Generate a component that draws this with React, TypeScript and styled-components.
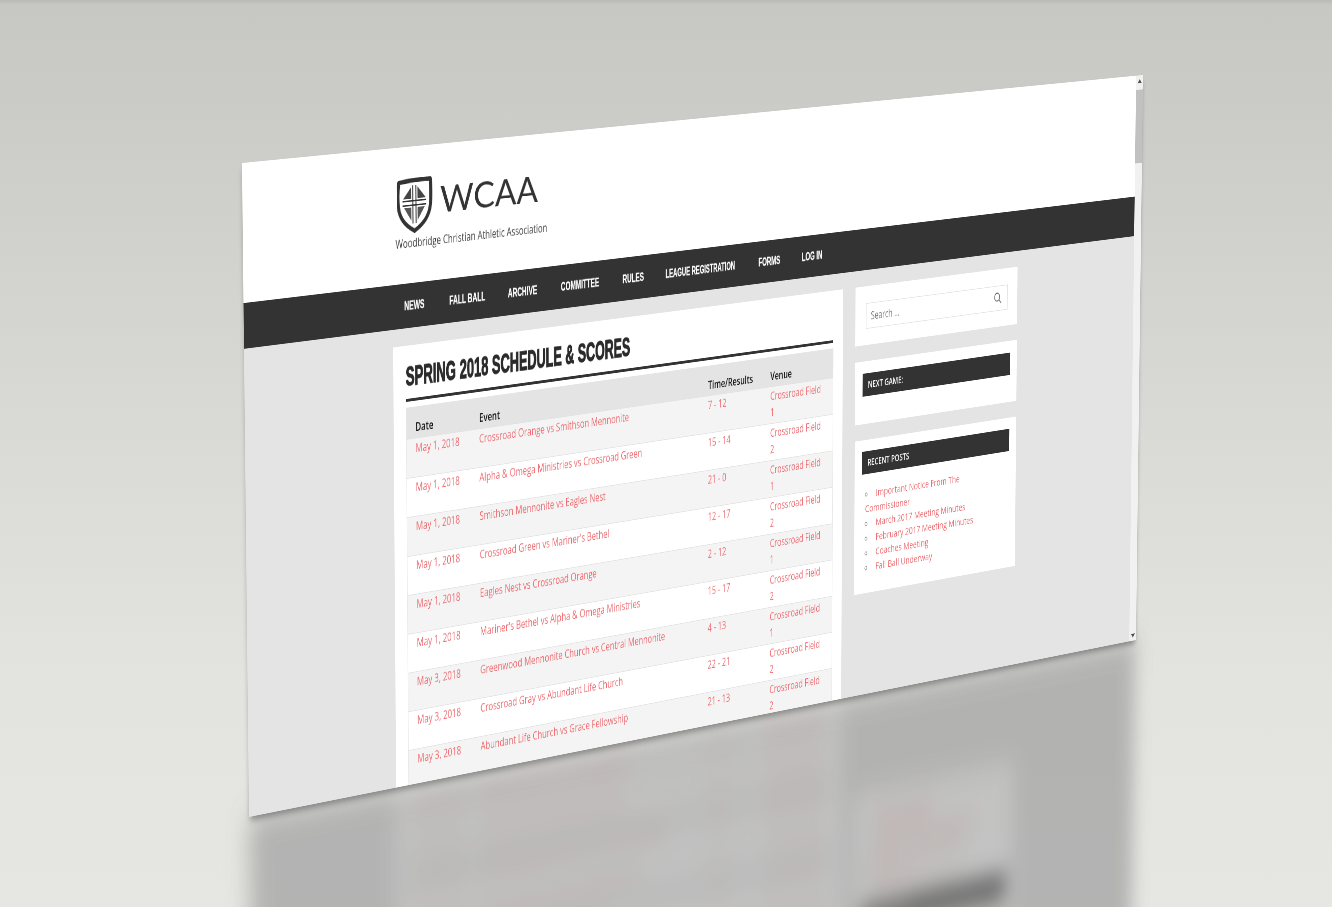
import styled, { createGlobalStyle } from "styled-components";

type Point = [number, number];

const SCREEN_W = 1920;
const SCREEN_H = 880;

// maps the 1920x880 page onto four corners of the photo
function quadMatrix(p0: Point, p1: Point, p2: Point, p3: Point) {
  const [x0, y0] = p0;
  const [x1, y1] = p1;
  const [x2, y2] = p2;
  const [x3, y3] = p3;
  const dx1 = x1 - x2;
  const dx2 = x3 - x2;
  const sx = x0 - x1 + x2 - x3;
  const dy1 = y1 - y2;
  const dy2 = y3 - y2;
  const sy = y0 - y1 + y2 - y3;
  const den = dx1 * dy2 - dx2 * dy1;
  const g = (sx * dy2 - dx2 * sy) / den;
  const h = (dx1 * sy - sx * dy1) / den;
  const a = x1 - x0 + g * x1;
  const b = x3 - x0 + h * x3;
  const d = y1 - y0 + g * y1;
  const e = y3 - y0 + h * y3;
  return `matrix3d(${a / SCREEN_W},${d / SCREEN_W},0,${g / SCREEN_W},${b / SCREEN_H},${e / SCREEN_H},0,${h / SCREEN_H},0,0,1,0,${x0},${y0},0,1)`;
}

const FRONT = quadMatrix([242, 163], [1143, 75], [1136, 640], [249, 817]);
const MIRROR = quadMatrix([256, 1440], [1129, 1180], [1136, 640], [249, 817]);

const LINK_RED = "#ec6c71";

const GlobalStyle = createGlobalStyle`
  html, body {
    margin: 0;
    padding: 0;
    overflow: hidden;
    background: #d6d7d2;
  }
`;

const Stage = styled.div`
  position: relative;
  width: 1332px;
  height: 907px;
  overflow: hidden;
  background: linear-gradient(
    180deg,
    #b9bab5 0,
    #c7c8c3 5px,
    #cbccc7 110px,
    #d9dad5 420px,
    #e3e4df 680px,
    #e6e7e2 907px
  );
`;

const Screen = styled.div<{ $mirror?: boolean }>`
  position: absolute;
  left: 0;
  top: 0;
  width: ${SCREEN_W}px;
  height: ${SCREEN_H}px;
  display: flex;
  overflow: hidden;
  transform-origin: 0 0;
  transform: ${(p) => (p.$mirror ? MIRROR : FRONT)};
  background: #e4e4e4;
  font-family: "Open Sans", "Liberation Sans", sans-serif;
  font-size: 15.5px;
  line-height: 24px;
  color: #333;
  ${(p) =>
    p.$mirror
      ? `filter: blur(20px) brightness(0.72); opacity: 0.78;`
      : `filter: blur(0.6px); box-shadow: 0 7px 10px -3px rgba(0, 0, 0, 0.4);`}
`;

const Page = styled.div`
  flex: 1;
  min-width: 0;
  display: flex;
  flex-direction: column;
`;

const Scrollbar = styled.div`
  width: 17px;
  flex: none;
  display: flex;
  flex-direction: column;
  align-items: center;
  background: #f1f1f1;
`;

const ArrowSlot = styled.div<{ $down?: boolean }>`
  width: 17px;
  height: 17px;
  flex: none;
  display: flex;
  align-items: center;
  justify-content: center;
  margin-top: ${(p) => (p.$down ? "auto" : "0")};
  &::before {
    content: "";
    border-left: 5px solid transparent;
    border-right: 5px solid transparent;
    ${(p) => (p.$down ? "border-top: 6px solid #505050;" : "border-bottom: 6px solid #505050;")}
  }
`;

const Thumb = styled.div`
  width: 17px;
  height: 113px;
  margin-top: 5px;
  background: #c1c1c1;
`;

const Header = styled.header`
  height: 186px;
  flex: none;
  box-sizing: border-box;
  padding: 43px 0 0 287px;
  background: #fff;
`;

const LogoMark = styled.svg`
  display: block;
  width: 284px;
  height: 76px;
  margin-left: 3px;
`;

const Tagline = styled.div`
  margin-top: 1px;
  font-size: 15.4px;
  line-height: 24px;
  color: #444;
`;

const NavBar = styled.nav`
  height: 61px;
  flex: none;
  box-sizing: border-box;
  padding-left: 303px;
  display: flex;
  align-items: center;
  gap: 49px;
  background: #333;
`;

const NavLink = styled.a<{ $width: number }>`
  width: ${(p) => p.$width}px;
  flex: none;
  font-family: "Liberation Sans", sans-serif;
  font-size: 17px;
  font-weight: 700;
  color: #fff;
  -webkit-text-stroke: 0.3px #fff;
  white-space: nowrap;
`;

// no condensed display face is installed, so the bold sans gets squeezed
const Squeezed = styled.span<{ $ratio: number }>`
  display: inline-block;
  transform: scaleX(${(p) => p.$ratio});
  transform-origin: 0 50%;
`;

const Body = styled.div`
  display: flex;
  align-items: flex-start;
  gap: 28px;
  padding: 24px 0 0 281px;
`;

const MainCard = styled.main`
  width: 936px;
  height: 900px;
  flex: none;
  box-sizing: border-box;
  padding: 0 22px 0 24px;
  background: #fff;
`;

const PageTitle = styled.h1`
  margin: 0 0 8px;
  padding: 24px 0 11px;
  border-bottom: 4px solid #333;
  font-family: "Liberation Sans", sans-serif;
  font-size: 36px;
  line-height: 38px;
  font-weight: 700;
  color: #2b2b2b;
  -webkit-text-stroke: 1.4px #2b2b2b;
  white-space: nowrap;
`;

const ScheduleTable = styled.table`
  width: 890px;
  table-layout: fixed;
  border-collapse: collapse;
  border-left: 1px solid #e8e8e8;
  border-right: 1px solid #e8e8e8;
`;

const HeadCell = styled.th`
  height: 43px;
  box-sizing: border-box;
  padding: 16px 17px 3px;
  background: #e4e4e4;
  text-align: left;
  vertical-align: bottom;
  font-weight: 600;
  color: #111;
`;

const Row = styled.tr`
  &:nth-child(odd) td {
    background: #f4f4f4;
  }
`;

const Cell = styled.td`
  padding: 1px 17px 4px;
  border-top: 1px solid #e2e2e2;
  vertical-align: top;
  color: ${LINK_RED};
  &:last-child {
    padding-right: 20px;
  }
`;

const Sidebar = styled.aside`
  width: 375px;
  flex: none;
  display: flex;
  flex-direction: column;
  gap: 24px;
`;

const Widget = styled.section<{ $height: number; $top?: number }>`
  height: ${(p) => p.$height}px;
  box-sizing: border-box;
  padding: ${(p) => p.$top ?? 17}px 16px 0 17px;
  background: #fff;
`;

const SearchBox = styled.div`
  height: 38px;
  margin: 8px 7px 0 7px;
  box-sizing: border-box;
  padding: 0 12px 0 10px;
  display: flex;
  align-items: center;
  justify-content: space-between;
  border: 1px solid #e2e2e2;
  color: #777;
  font-size: 15.5px;
`;

const WidgetTitle = styled.h3`
  height: 34px;
  margin: 0;
  padding-left: 12px;
  display: flex;
  align-items: center;
  background: #333;
  color: #fff;
  font-size: 13.5px;
  font-weight: 600;
`;

const PostList = styled.ul`
  margin: 18px 0 0;
  padding: 0 60px 0 7px;
  list-style: circle inside;
  font-size: 15.3px;
  line-height: 22px;
  color: #777;
`;

const PostLink = styled.a`
  margin-left: 3px;
  color: ${LINK_RED};
`;

const games = [
  ["May 1, 2018", "Crossroad Orange vs Smithson Mennonite", "7 - 12", "Crossroad Field 1"],
  ["May 1, 2018", "Alpha & Omega Ministries vs Crossroad Green", "15 - 14", "Crossroad Field 2"],
  ["May 1, 2018", "Smithson Mennonite vs Eagles Nest", "21 - 0", "Crossroad Field 1"],
  ["May 1, 2018", "Crossroad Green vs Mariner's Bethel", "12 - 17", "Crossroad Field 2"],
  ["May 1, 2018", "Eagles Nest vs Crossroad Orange", "2 - 12", "Crossroad Field 1"],
  ["May 1, 2018", "Mariner's Bethel vs Alpha & Omega Ministries", "15 - 17", "Crossroad Field 2"],
  ["May 3, 2018", "Greenwood Mennonite Church vs Central Mennonite", "4 - 13", "Crossroad Field 1"],
  ["May 3, 2018", "Crossroad Gray vs Abundant Life Church", "22 - 21", "Crossroad Field 2"],
  ["May 3, 2018", "Abundant Life Church vs Grace Fellowship", "21 - 13", "Crossroad Field 2"],
];

const navItems = [
  { label: "NEWS", width: 39, ratio: 0.77 },
  { label: "FALL BALL", width: 67, ratio: 0.77 },
  { label: "ARCHIVE", width: 58, ratio: 0.77 },
  { label: "COMMITTEE", width: 78, ratio: 0.77 },
  { label: "RULES", width: 41, ratio: 0.77 },
  { label: "LEAGUE REGISTRATION", width: 150, ratio: 0.73 },
  { label: "FORMS", width: 46, ratio: 0.77 },
  { label: "LOG IN", width: 44, ratio: 0.77 },
];

const posts = [
  "Important Notice From The Commissioner",
  "March 2017 Meeting Minutes",
  "February 2017 Meeting Minutes",
  "Coaches Meeting",
  "Fall Ball Underway",
];

function Logo() {
  return (
    <LogoMark viewBox="0 0 284 76">
      <path
        d="M4 5 Q34 2 65 3 Q67 20 65 38 C63 54 50 65 34 72 C18 65 5 54 3 38 Q1 20 4 5 Z"
        fill="#fff"
        stroke="#333"
        strokeWidth="6"
        strokeLinejoin="round"
      />
      <path d="M28 12 V28 H12 Z M40 12 V28 H56 Z" fill="#444" />
      <path d="M14 40 H28 V58 Z M54 40 H40 V58 Z" fill="#555" />
      <path d="M31 10 V62 M37 10 V62 M11 31 H57 M11 37 H57" fill="none" stroke="#333" strokeWidth="1.8" />
      <rect x="32" y="32" width="4" height="4" fill="#fff" />
      <text
        x="84"
        y="51"
        fontFamily="Lato, sans-serif"
        fontWeight="400"
        fontSize="50"
        fill="#333"
        textLength="194"
        lengthAdjust="spacingAndGlyphs"
      >
        WCAA
      </text>
    </LogoMark>
  );
}

function SitePage() {
  return (
    <>
      <Page>
        <Header>
          <Logo />
          <Tagline>Woodbridge Christian Athletic Association</Tagline>
        </Header>
        <NavBar>
          {navItems.map((item) => (
            <NavLink key={item.label} $width={item.width}>
              <Squeezed $ratio={item.ratio}>{item.label}</Squeezed>
            </NavLink>
          ))}
        </NavBar>
        <Body>
          <MainCard>
            <PageTitle>
              <Squeezed $ratio={0.712}>SPRING 2018 SCHEDULE &amp; SCORES</Squeezed>
            </PageTitle>
            <ScheduleTable>
              <colgroup>
                <col width="126" />
                <col width="473" />
                <col width="135" />
                <col width="156" />
              </colgroup>
              <thead>
                <tr>
                  <HeadCell>Date</HeadCell>
                  <HeadCell>Event</HeadCell>
                  <HeadCell>Time/Results</HeadCell>
                  <HeadCell>Venue</HeadCell>
                </tr>
              </thead>
              <tbody>
                {games.map((game, index) => (
                  <Row key={index}>
                    {game.map((value, i) => (
                      <Cell key={i}>{value}</Cell>
                    ))}
                  </Row>
                ))}
              </tbody>
            </ScheduleTable>
          </MainCard>
          <Sidebar>
            <Widget $height={87}>
              <SearchBox>
                <span>Search ...</span>
                <svg width="20" height="20" viewBox="0 0 20 20" fill="none" stroke="#666" strokeWidth="1.6">
                  <circle cx="8" cy="8" r="6" />
                  <path d="M12.5 12.5 L18 18" />
                </svg>
              </SearchBox>
            </Widget>
            <Widget $height={93} $top={18}>
              <WidgetTitle>NEXT GAME:</WidgetTitle>
            </Widget>
            <Widget $height={229}>
              <WidgetTitle>RECENT POSTS</WidgetTitle>
              <PostList>
                {posts.map((post) => (
                  <li key={post}>
                    <PostLink>{post}</PostLink>
                  </li>
                ))}
              </PostList>
            </Widget>
          </Sidebar>
        </Body>
      </Page>
      <Scrollbar>
        <ArrowSlot />
        <Thumb />
        <ArrowSlot $down />
      </Scrollbar>
    </>
  );
}

export default function App() {
  return (
    <Stage>
      <GlobalStyle />
      <Screen $mirror aria-hidden="true">
        <SitePage />
      </Screen>
      <Screen>
        <SitePage />
      </Screen>
    </Stage>
  );
}
